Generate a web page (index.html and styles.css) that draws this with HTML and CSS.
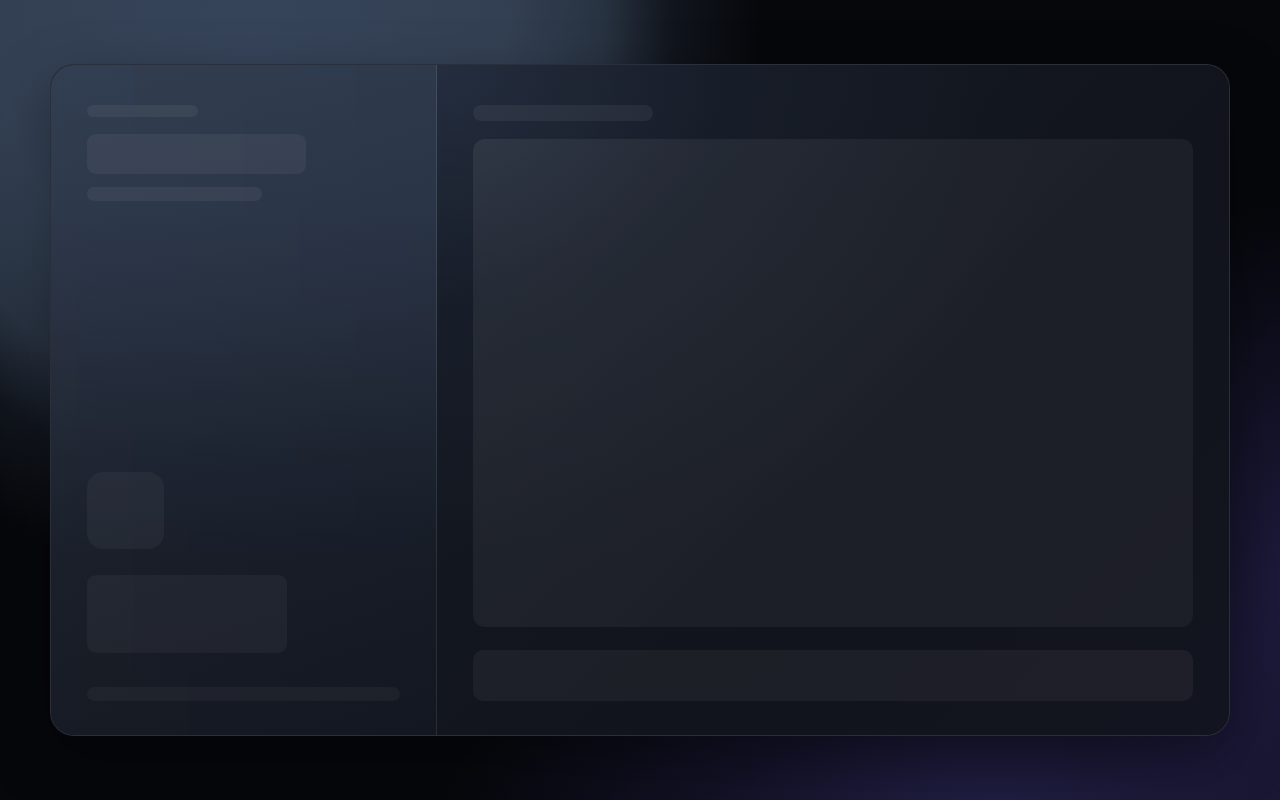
FILE: index.html
```html
<!DOCTYPE html>
<html lang="en">
<head>
<meta charset="utf-8">
<title>Loading</title>
<link rel="stylesheet" href="styles.css">
</head>
<body>
<div class="stage">
  <main class="card" aria-busy="true">
    <aside class="side">
      <div class="side-top">
        <div class="sk sk-label"></div>
        <div class="sk sk-title"></div>
        <div class="sk sk-sub"></div>
      </div>
      <div class="side-bottom">
        <div class="sk sk-avatar"></div>
        <div class="sk sk-box"></div>
        <div class="sk sk-line"></div>
      </div>
    </aside>
    <section class="main">
      <div class="sk sk-heading"></div>
      <div class="sk sk-canvas"></div>
      <div class="sk sk-bar"></div>
    </section>
  </main>
</div>
</body>
</html>
```

FILE: styles.css
```css
* { box-sizing: border-box; }
html, body { margin: 0; padding: 0; height: 100%; }
body {
  font-family: "Inter", "Liberation Sans", sans-serif;
  background-color: #06070b;
  background-image:
    radial-gradient(ellipse 640px 700px at 250px 30px, #36445a 0%, #334053 40%, rgba(46,58,75,0.85) 55%, rgba(30,38,50,0.45) 66%, rgba(6,7,11,0) 80%),
    radial-gradient(ellipse 560px 320px at 1000px 840px, rgba(48,44,100,0.7) 0%, rgba(38,34,80,0.4) 50%, rgba(6,7,11,0) 100%),
    radial-gradient(ellipse 240px 380px at 1300px 580px, rgba(45,40,95,0.6) 0%, rgba(6,7,11,0) 100%);
  overflow: hidden;
}
.stage {
  width: 1280px;
  height: 800px;
  padding: 64px 50px;
}
.card {
  width: 1180px;
  height: 672px;
  display: flex;
  border: 1px solid rgba(255,255,255,0.11);
  border-radius: 24px;
  overflow: hidden;
  background-color: #12161f;
  box-shadow: 0 20px 60px rgba(0,0,0,0.35);
}
.side {
  width: 386px;
  flex: none;
  border-right: 1px solid rgba(255,255,255,0.08);
  padding: 40px 36px 34px;
  display: flex;
  flex-direction: column;
  justify-content: space-between;
  background-image:
    linear-gradient(90deg, rgba(255,255,255,0.01) 0%, rgba(0,0,0,0.04) 100%),
    linear-gradient(180deg, #303c4f 0%, #2c374a 20%, #252e3e 40%, #1d2431 58%, #171c27 75%, #131822 100%);
}
.main {
  flex: 1;
  padding: 40px 36px 34px;
  display: flex;
  flex-direction: column;
  background-image:
    radial-gradient(ellipse 620px 520px at 0 0, rgba(38,48,66,0.9) 0%, rgba(30,38,54,0.4) 45%, rgba(18,22,31,0) 100%),
    linear-gradient(135deg, #141922 0%, #11141c 60%, #12141f 100%);
}
.sk {
  background: rgba(255,255,255,0.055);
  border-radius: 8px;
}
.side-top { display: flex; flex-direction: column; }
.sk-label { width: 111px; height: 12px; border-radius: 6px; }
.sk-title { width: 219px; height: 40px; margin-top: 17px; border-radius: 9px; }
.sk-sub { width: 175px; height: 14px; margin-top: 13px; border-radius: 7px; }
.side-bottom { display: flex; flex-direction: column; }
.sk-avatar { width: 77px; height: 77px; border-radius: 16px; background: rgba(255,255,255,0.045); }
.sk-box { width: 200px; height: 78px; margin-top: 26px; border-radius: 9px; background: rgba(255,255,255,0.045); }
.sk-line { width: 100%; height: 14px; margin-top: 34px; border-radius: 7px; background: rgba(255,255,255,0.04); }
.sk-heading { width: 180px; height: 16px; border-radius: 8px; }
.sk-canvas {
  flex: 1;
  margin-top: 18px;
  border-radius: 12px;
  background: linear-gradient(135deg, rgba(255,255,255,0.065) 0%, rgba(255,255,255,0.05) 40%, rgba(255,255,255,0.045) 100%);
}
.sk-bar {
  height: 51px;
  margin-top: 23px;
  border-radius: 10px;
  background: rgba(255,255,255,0.05);
}
```
